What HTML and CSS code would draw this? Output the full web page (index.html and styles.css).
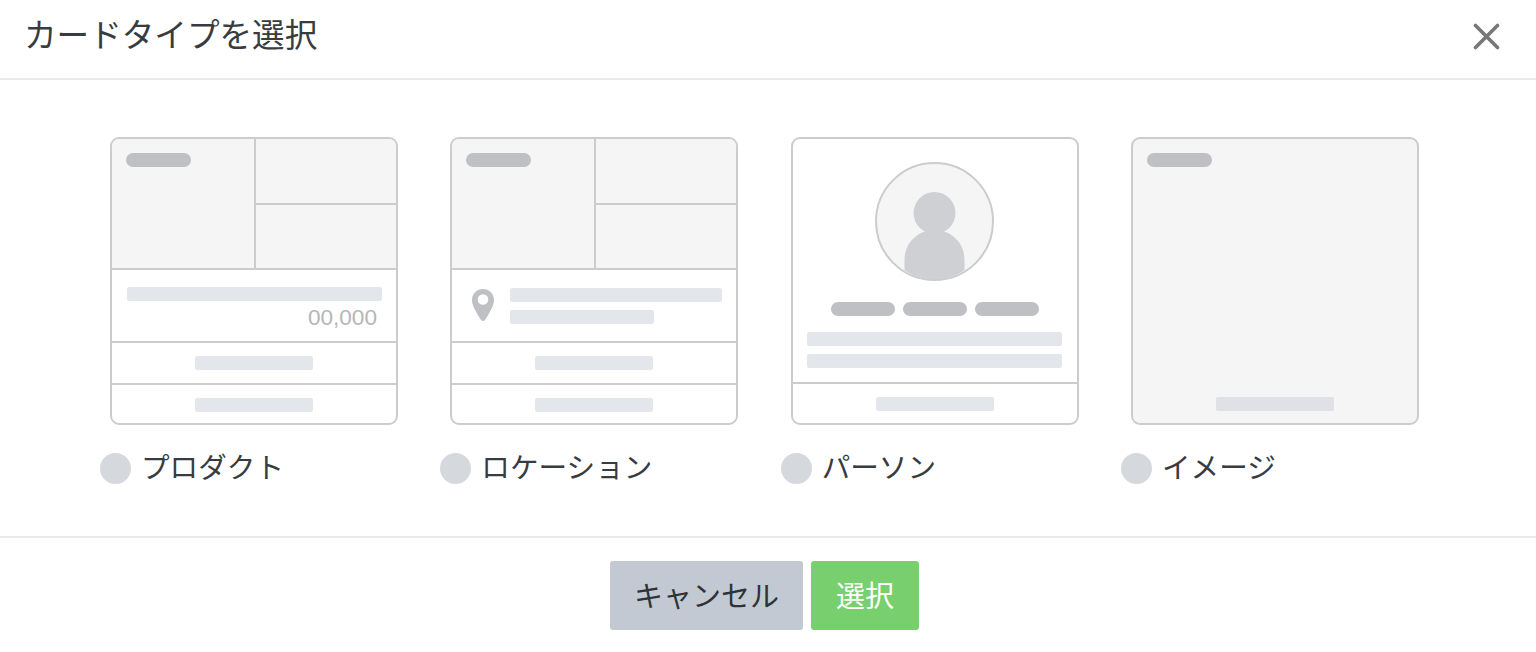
FILE: index.html
```html
<!DOCTYPE html>
<html lang="ja">
<head>
    <meta charset="UTF-8">
    <meta name="viewport" content="width=device-width, initial-scale=1.0">
    <title>カードタイプを選択</title>
    <link rel="stylesheet" href="styles.css">
</head>
<body>
    <header class="modal-header">
        <h1 class="modal-title">カードタイプを選択</h1>
        <button class="close-btn" type="button" aria-label="閉じる">
            <svg width="27" height="27" viewBox="0 0 27 27">
                <path d="M2.5 2.5L24.5 24.5M24.5 2.5L2.5 24.5" fill="none" stroke="#777" stroke-width="3.6" stroke-linecap="round"/>
            </svg>
        </button>
    </header>

    <main class="card-types">
        <!-- Product -->
        <label class="card-type">
            <div class="card">
                <div class="photos">
                    <div class="photo-main"><span class="pill"></span></div>
                    <div class="photo-side"></div>
                    <div class="photo-side"></div>
                </div>
                <div class="info info-product">
                    <span class="bar bar-full"></span>
                    <span class="price">00,000</span>
                </div>
                <div class="action"><span class="bar bar-action"></span></div>
                <div class="action action-last"><span class="bar bar-action"></span></div>
            </div>
            <div class="type-label"><span class="radio"></span>プロダクト</div>
        </label>

        <!-- Location -->
        <label class="card-type">
            <div class="card">
                <div class="photos">
                    <div class="photo-main"><span class="pill"></span></div>
                    <div class="photo-side"></div>
                    <div class="photo-side"></div>
                </div>
                <div class="info info-location">
                    <svg class="pin" width="22" height="32" viewBox="0 0 22 32">
                        <path fill-rule="evenodd" fill="#bfc0c3" d="M11 0C4.9 0 0 4.9 0 11c0 3.5 1.2 6.2 2.9 9.6C4.7 24.1 7 28 9 31c1 1.3 3 1.3 4 0 2-3 4.3-6.9 6.1-10.4C20.8 17.2 22 14.5 22 11 22 4.9 17.1 0 11 0zM11 5.2a5.3 5.3 0 1 1 0 10.600 5.3 5.3 0 0 1 0-10.600z"/>
                    </svg>
                    <div class="info-lines">
                        <span class="bar bar-wide"></span>
                        <span class="bar bar-short"></span>
                    </div>
                </div>
                <div class="action"><span class="bar bar-action"></span></div>
                <div class="action action-last"><span class="bar bar-action"></span></div>
            </div>
            <div class="type-label"><span class="radio"></span>ロケーション</div>
        </label>

        <!-- Person -->
        <label class="card-type">
            <div class="card">
                <div class="person">
                    <svg class="avatar" width="119" height="119" viewBox="0 0 119 119">
                        <circle cx="59.5" cy="59.5" r="58.5" fill="#f5f5f5" stroke="#ccc" stroke-width="2"/>
                        <circle cx="59.5" cy="51" r="21" fill="#cfd0d3"/>
                        <path fill="#cfd0d3" d="M29.5 108V98c0-17 13-30 30-30s30 13 30 30v10c-8 6-18.5 9.5-30 9.5S37.5 114 29.5 108z"/>
                    </svg>
                    <div class="tags">
                        <span class="pill"></span>
                        <span class="pill"></span>
                        <span class="pill"></span>
                    </div>
                    <span class="bar bar-full"></span>
                    <span class="bar bar-full"></span>
                </div>
                <div class="action action-last"><span class="bar bar-action"></span></div>
            </div>
            <div class="type-label"><span class="radio"></span>パーソン</div>
        </label>

        <!-- Image -->
        <label class="card-type">
            <div class="card card-image">
                <span class="pill"></span>
                <span class="bar bar-action"></span>
            </div>
            <div class="type-label"><span class="radio"></span>イメージ</div>
        </label>
    </main>

    <footer class="modal-footer">
        <button class="btn btn-cancel" type="button">キャンセル</button>
        <button class="btn btn-select" type="button">選択</button>
    </footer>
</body>
</html>
```

FILE: styles.css
```css
* {
    box-sizing: border-box;
}

body {
    margin: 0;
    background-color: #fff;
    color: #383c41;
    font-family: "Liberation Sans", "Noto Sans CJK JP", sans-serif;
    overflow: hidden;
}

/* Header */
.modal-header {
    display: flex;
    align-items: center;
    justify-content: space-between;
    height: 80px;
    padding: 0 36px 6px 24px;
    border-bottom: 2px solid #eaeaea;
}

.modal-title {
    margin: 0;
    font-size: 32.6px;
    font-weight: 400;
    line-height: 1.2;
}

.close-btn {
    display: flex;
    padding: 0;
    border: 0;
    background: none;
}

/* Card type list */
.card-types {
    display: grid;
    grid-template-columns: repeat(4, 340.33px);
    height: 456px;
    padding: 57px 0 0 100px;
}

.card-type {
    display: block;
}

.card {
    display: flex;
    flex-direction: column;
    width: 288px;
    height: 288px;
    margin-left: 10px;
    border: 2px solid #ccc;
    border-radius: 9px;
    overflow: hidden;
}

/* Placeholder shapes */
.pill {
    display: block;
    width: 65px;
    height: 14px;
    border-radius: 7px;
    background-color: #bfc0c3;
}

.bar {
    display: block;
    height: 14px;
    border-radius: 2px;
    background-color: #e3e6eb;
}

.bar-full {
    width: 255px;
}

.bar-action {
    width: 118px;
}

.bar-wide {
    width: 212px;
}

.bar-short {
    width: 144px;
}

/* Photo grid */
.photos {
    display: grid;
    grid-template-columns: 144px 1fr;
    grid-template-rows: 65.5px 1fr;
    flex: none;
    height: 131px;
    background-color: #f5f5f5;
    border-bottom: 2px solid #ccc;
}

.photo-main {
    grid-row: 1 / 3;
    padding: 14px;
    border-right: 2px solid #ccc;
}

.photo-side:nth-child(2) {
    border-bottom: 2px solid #ccc;
}

/* Info rows */
.info {
    flex: none;
    height: 73px;
    border-bottom: 2px solid #ccc;
}

.info-product {
    padding: 17px 0 0 15px;
}

.price {
    display: block;
    margin-top: 4px;
    padding-right: 19px;
    color: #b5b6b9;
    font-size: 22.6px;
    line-height: 26px;
    text-align: right;
}

.info-location {
    display: flex;
    padding: 19px 0 0 20px;
}

.pin {
    flex: none;
}

.info-lines {
    display: flex;
    flex-direction: column;
    gap: 8px;
    margin: -1px 0 0 16px;
}

.action {
    display: flex;
    justify-content: center;
    flex: none;
    height: 42px;
    padding-top: 13px;
    border-bottom: 2px solid #ccc;
}

.action-last {
    height: 40px;
    border-bottom: 0;
}

/* Person card */
.person {
    display: flex;
    flex-direction: column;
    align-items: center;
    flex: none;
    height: 245px;
    padding-top: 23px;
    border-bottom: 2px solid #ccc;
}

.avatar {
    flex: none;
}

.tags {
    display: flex;
    gap: 8px;
    margin: 21px 0 16px;
}

.tags .pill {
    width: 64px;
}

.person .bar-full {
    margin-bottom: 7.5px;
}

/* Image card */
.card-image {
    justify-content: space-between;
    padding: 14px 14px 12px;
    background-color: #f5f5f5;
}

.card-image .bar {
    align-self: center;
    background-color: #dfe1e6;
}

/* Label with radio */
.type-label {
    display: flex;
    align-items: center;
    gap: 10px;
    height: 32px;
    margin-top: 27px;
    font-size: 28.6px;
    line-height: 32px;
}

.radio {
    flex: none;
    width: 31px;
    height: 31px;
    border-radius: 50%;
    background-color: #d5d9de;
}

/* Footer */
.modal-footer {
    display: flex;
    justify-content: center;
    gap: 8px;
    height: 116px;
    padding: 23px 7px 0 0;
    border-top: 2px solid #e8ebec;
}

.btn {
    height: 69px;
    padding: 0 0 4px;
    border: 0;
    border-radius: 3px;
    font-family: inherit;
    font-size: 29px;
}

.btn-cancel {
    width: 193px;
    background-color: #c3c9d2;
    color: #2f3337;
}

.btn-select {
    width: 108px;
    background-color: #77d06d;
    color: #fff;
}
```
